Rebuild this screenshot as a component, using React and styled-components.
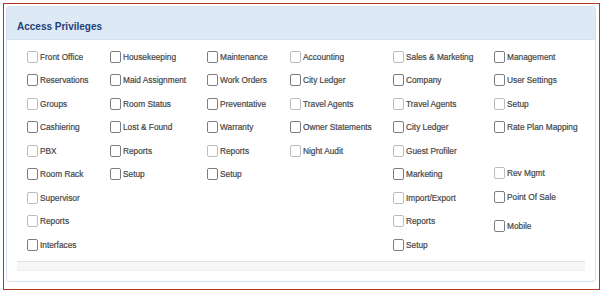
import React from "react";
import styled, { createGlobalStyle } from "styled-components";

const GlobalStyle = createGlobalStyle`
  html, body {
    margin: 0;
    padding: 0;
    background: #fff;
  }
  body {
    font-family: "Liberation Sans", Arial, sans-serif;
  }
`;

const Frame = styled.div`
  margin: 3px 0 0 3px;
  width: 597px;
  height: 287px;
  box-sizing: border-box;
  border: 1px solid #b3361c;
  padding: 2px 3px 0 2px;
`;

const Panel = styled.div`
  height: 276px;
  box-sizing: border-box;
  border: 1px solid #d5e1ed;
  border-radius: 4px;
  background: #fff;
  display: flex;
  flex-direction: column;
  overflow: hidden;
`;

const Header = styled.div`
  height: 32px;
  background: #dde9f5;
  display: flex;
  align-items: center;
  padding: 0 10px;
  border-bottom: 1px solid #d5e1ed;
`;

const Title = styled.h2`
  margin: 0;
  font-size: 10px;
  font-weight: bold;
  color: #1f3e7a;
  padding-top: 6px;
`;

const Body = styled.div`
  display: grid;
  grid-template-columns: 83px 97px 83px 103px 101px 1fr;
  padding: 5px 0 0 20px;
`;

const Column = styled.div`
  display: flex;
  flex-direction: column;
`;

const Option = styled.label`
  height: 23.5px;
  display: flex;
  align-items: center;
  gap: 2px;
  margin-top: ${(p) => p.$shift || 0}px;
  font-size: 8.3px;
  color: #474747;
  -webkit-text-stroke: 0.2px #474747;
  white-space: nowrap;
  visibility: ${(p) => (p.$blank ? "hidden" : "visible")};
`;

const Box = styled.span`
  width: 9px;
  height: 10px;
  flex: none;
  border: 1px solid ${(p) => (p.$faint ? "#bdbdbd" : "#7d7d7d")};
  border-radius: 2px;
  background: #fff;
`;

const Footer = styled.div`
  margin: 4px 10px 0;
  height: 8px;
  background: #f6f6f6;
  border-top: 1px solid #e2e2e2;
  border-bottom: 1px solid #ececec;
`;

const COLUMNS = [
  [
    ["Front Office", 1],
    ["Reservations"],
    ["Groups", 1],
    ["Cashiering"],
    ["PBX", 1],
    ["Room Rack"],
    ["Supervisor", 1],
    ["Reports", 1],
    ["Interfaces"],
  ],
  [
    ["Housekeeping"],
    ["Maid Assignment"],
    ["Room Status"],
    ["Lost & Found"],
    ["Reports"],
    ["Setup"],
  ],
  [
    ["Maintenance"],
    ["Work Orders"],
    ["Preventative"],
    ["Warranty"],
    ["Reports", 1],
    ["Setup"],
  ],
  [
    ["Accounting", 1],
    ["City Ledger"],
    ["Travel Agents", 1],
    ["Owner Statements"],
    ["Night Audit", 1],
  ],
  [
    ["Sales & Marketing", 1],
    ["Company"],
    ["Travel Agents", 1],
    ["City Ledger"],
    ["Guest Profiler", 1],
    ["Marketing"],
    ["Import/Export", 1],
    ["Reports", 1],
    ["Setup"],
  ],
  [
    ["Management"],
    ["User Settings"],
    ["Setup", 1],
    ["Rate Plan Mapping"],
    null,
    ["Rev Mgmt", 1, -1],
    ["Point Of Sale", 0, 0],
    ["Mobile", 0, 6],
  ],
];

export default function App() {
  return (
    <>
      <GlobalStyle />
      <Frame>
        <Panel>
          <Header>
            <Title>Access Privileges</Title>
          </Header>
          <Body>
            {COLUMNS.map((col, i) => (
              <Column key={i}>
                {col.map((item, j) =>
                  item ? (
                    <Option key={j} $shift={item[2]}>
                      <Box $faint={item[1]} />
                      {item[0]}
                    </Option>
                  ) : (
                    <Option key={j} $blank>
                      <Box />
                    </Option>
                  )
                )}
              </Column>
            ))}
          </Body>
          <Footer />
        </Panel>
      </Frame>
    </>
  );
}
